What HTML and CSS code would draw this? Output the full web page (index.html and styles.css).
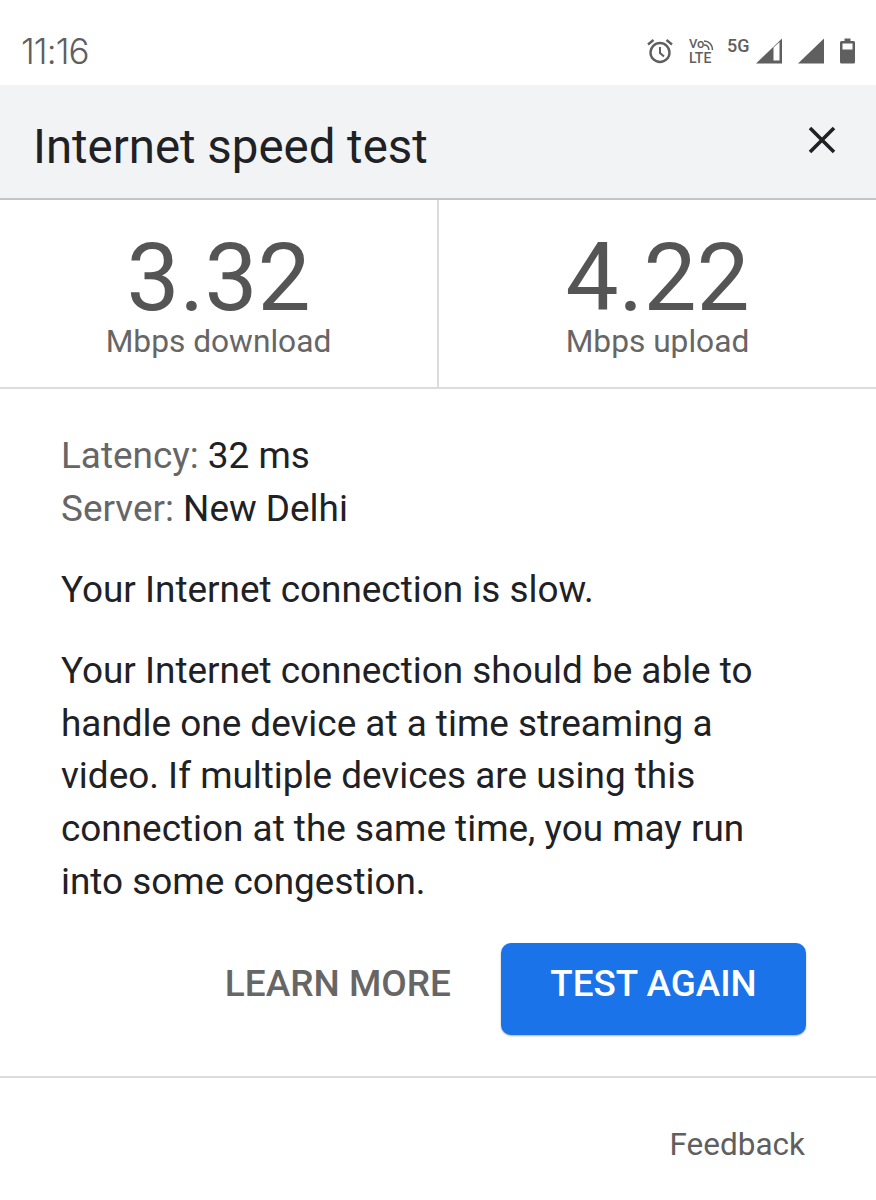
FILE: index.html
```html
<!DOCTYPE html>
<html>
<head>
  <title>Internet speed test</title>
  <link rel="stylesheet" href="styles.css">
</head>
<body>
  <div class="status-bar">
    <span class="clock">11:16</span>
    <div class="status-icons">
      <svg class="icon-alarm" width="26" height="26" viewBox="0 0 26 26">
        <circle cx="13" cy="14.500" r="9.500" fill="none" stroke="#5f5f5f" stroke-width="2.400"/>
        <path d="M13 9V15l4 3.500" fill="none" stroke="#5f5f5f" stroke-width="2"/>
        <path d="M1 6.500L6.500 2M25 6.500L19.500 2" fill="none" stroke="#5f5f5f" stroke-width="2.400"/>
      </svg>
      <div class="volte">
        <div class="volte-top">
          <span>Vo</span>
          <svg width="10" height="11" viewBox="0 0 10 11">
            <path d="M0 1C5 1 8.500 4.500 8.500 10M0 5C3 5 4.800 7 4.800 10" fill="none" stroke="#5f5f5f" stroke-width="1.600"/>
          </svg>
        </div>
        <span class="volte-lte">LTE</span>
      </div>
      <span class="net-type">5G</span>
      <svg class="icon-signal" width="26" height="26" viewBox="0 0 26 26">
        <path d="M0 25.500L26 0.500V25.500Z" fill="#5f5f5f"/>
        <path d="M17.500 22.500V9.500L23.500 4V22.500Z" fill="#fff"/>
      </svg>
      <svg class="icon-signal" width="26" height="26" viewBox="0 0 26 26">
        <path d="M0 25.500L26 0.500V25.500Z" fill="#5f5f5f"/>
      </svg>
      <svg class="icon-battery" width="15" height="26" viewBox="0 0 15 26">
        <path d="M4.500 0.500H10.500V3H13.500Q15 3 15 4.500V24Q15 25.500 13.500 25.500H1.500Q0 25.500 0 24V4.500Q0 3 1.500 3H4.500Z" fill="#5f5f5f"/>
        <rect x="2.500" y="5.500" width="10" height="6" fill="#fff"/>
      </svg>
    </div>
  </div>

  <div class="title-bar">
    <h1>Internet speed test</h1>
    <svg class="close-icon" width="30" height="30" viewBox="0 0 30 30">
      <path d="M3 3L27 27M27 3L3 27" fill="none" stroke="#202124" stroke-width="3.600"/>
    </svg>
  </div>

  <div class="results">
    <div class="result">
      <div class="speed">3.32</div>
      <div class="unit">Mbps download</div>
    </div>
    <div class="result">
      <div class="speed">4.22</div>
      <div class="unit">Mbps upload</div>
    </div>
  </div>

  <div class="details">
    <p><span class="label">Latency:</span> 32 ms<br><span class="label">Server:</span> New Delhi</p>
    <p>Your Internet connection is slow.</p>
    <p>Your Internet connection should be able to handle one device at a time streaming a video. If multiple devices are using this connection at the same time, you may run into some congestion.</p>
  </div>

  <div class="actions">
    <a class="learn-more">LEARN MORE</a>
    <button class="test-again">TEST AGAIN</button>
  </div>

  <div class="footer">
    <a class="feedback">Feedback</a>
  </div>
</body>
</html>
```

FILE: styles.css
```css
body {
  margin: 0;
  font-family: Roboto, "Liberation Sans", sans-serif;
  color: #202124;
  background-color: #fff;
}

.status-bar {
  height: 85px;
  display: flex;
  align-items: center;
  justify-content: space-between;
  padding: 17px 21px 0 21px;
  box-sizing: border-box;
}

.clock {
  font-family: Inter, Roboto, sans-serif;
  font-size: 35px;
  font-weight: 350;
  color: #5f5f5f;
  letter-spacing: -0.900px;
}

.status-icons {
  display: flex;
  align-items: flex-end;
  height: 26px;
}

.icon-alarm {
  margin-right: 16px;
}

.volte {
  display: flex;
  flex-direction: column;
  width: 28px;
  margin: 0 10px -2px 0;
  font-size: 13px;
  line-height: 15px;
  font-weight: 500;
  color: #5f5f5f;
}

.volte-top {
  display: flex;
  align-items: flex-end;
}

.volte-lte {
  font-size: 14px;
}

.net-type {
  width: 23px;
  margin-right: 6px;
  align-self: flex-start;
  font-size: 18px;
  font-weight: 500;
  line-height: 16px;
  color: #5f5f5f;
}

.icon-signal {
  margin-right: 16px;
}

.icon-battery {
  display: block;
}

.title-bar {
  height: 115px;
  box-sizing: border-box;
  background-color: #f1f3f4;
  border-bottom: 2px solid #c4c4c4;
  display: flex;
  align-items: center;
  justify-content: space-between;
  padding: 0 39px 0 33px;
}

h1 {
  margin: 10px 0 0;
  font-size: 47.400px;
  font-weight: 400;
  color: #202124;
}

.close-icon {
  margin-bottom: 3px;
}

.results {
  height: 189px;
  box-sizing: border-box;
  border-bottom: 2px solid #dadce0;
  display: grid;
  grid-template-columns: 439px 1fr;
}

.result {
  text-align: center;
  padding-top: 39px;
}

.result:first-child {
  border-right: 2px solid #dadce0;
}

.speed {
  font-size: 94.500px;
  line-height: 78px;
  color: #555;
}

.unit {
  margin-top: 11px;
  font-size: 31.700px;
  line-height: 27px;
  color: #666;
}

.details {
  padding: 41px 100px 0 61px;
  font-size: 36.900px;
  line-height: 52.700px;
}

.details p {
  margin: 0 0 28.400px;
}

.label {
  color: #666;
}

.actions {
  display: flex;
  justify-content: flex-end;
  align-items: center;
  gap: 50px;
  padding: 6px 70px 41px 0;
  border-bottom: 2px solid #dadce0;
}

.learn-more {
  font-size: 37px;
  font-weight: 500;
  color: #666;
  margin-bottom: 11px;
}

.test-again {
  width: 305px;
  height: 92px;
  padding: 0 0 10px;
  border: none;
  border-radius: 10px;
  background-color: #1a73e8;
  color: #fff;
  font-family: Roboto, "Liberation Sans", sans-serif;
  font-size: 36.800px;
  font-weight: 500;
  box-shadow: 0 1px 2px rgba(60, 64, 67, 0.4);
}

.footer {
  display: flex;
  justify-content: flex-end;
  padding: 48px 71px 0 0;
}

.feedback {
  font-size: 31.500px;
  color: #5f5f5f;
}
```
